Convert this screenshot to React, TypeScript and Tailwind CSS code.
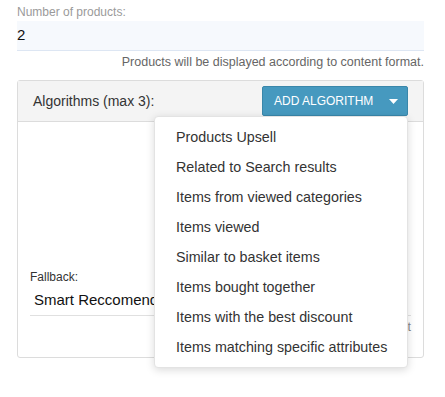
import React from "react";

const items = [
  "Products Upsell",
  "Related to Search results",
  "Items from viewed categories",
  "Items viewed",
  "Similar to basket items",
  "Items bought together",
  "Items with the best discount",
  "Items matching specific attributes",
];

export default function App() {
  return (
    <div
      className="w-[445px] h-[397px] bg-white pl-[17px] pr-[21px] pt-[5px] text-[#333]"
      style={{ fontFamily: '"Liberation Sans", Arial, sans-serif' }}
    >
      <div className="text-[12px] leading-[14px] text-[#9a9a9a]">Number of products:</div>
      <div className="mt-[2px] h-[30px] bg-[#f6f9fd] border-b border-[#dde6f3] flex items-center text-[15px] text-[#111]">
        2
      </div>
      <div className="mt-[4px] text-right text-[12.5px] leading-[14px] text-[#666]">
        Products will be displayed according to content format.
      </div>

      <div className="relative mt-[11px] border border-[#dcdcdc] rounded-[3px]">
        <div className="h-[41px] bg-[#f4f4f4] border-b border-[#dcdcdc] flex items-center justify-between pl-[15px] pr-[15px]">
          <span className="text-[14px]">Algorithms (max 3):</span>
          <div className="relative">
            <button className="h-[30px] w-[146px] bg-[#4699bf] border border-[#3a87aa] rounded-[2px] text-white text-[12px] flex items-center pl-[11px]">
              <span>ADD ALGORITHM</span>
              <svg className="ml-auto mr-[9px]" width="9" height="5" viewBox="0 0 9 5">
                <path d="M0 0 L9 0 L4.5 5 Z" fill="white" />
              </svg>
            </button>
            <div className="absolute right-0 top-[30px] w-[254px] bg-white rounded-[4px] border border-[#e3e3e3] shadow-[0_2px_8px_rgba(0,0,0,0.15)] pt-[6px] pb-[4px] z-10">
              {items.map((t) => (
                <div key={t} className="h-[30px] flex items-center pl-[21px] text-[14.3px] text-[#333]">
                  {t}
                </div>
              ))}
            </div>
          </div>
        </div>
        <div className="px-[12px] pt-[148px] pb-[23px]">
          <div className="text-[12px] leading-[14px] text-[#333]">Fallback:</div>
          <div className="mt-[2px] h-[30px] border-b border-[#e0e0e0] flex items-center pl-[4px] text-[15px] text-[#111]">
            Smart Reccomendations
          </div>
          <div className="mt-[4px] text-right text-[12.5px] leading-[14px] text-[#888]">
            Applied to fill the layout
          </div>
        </div>
      </div>
    </div>
  );
}
